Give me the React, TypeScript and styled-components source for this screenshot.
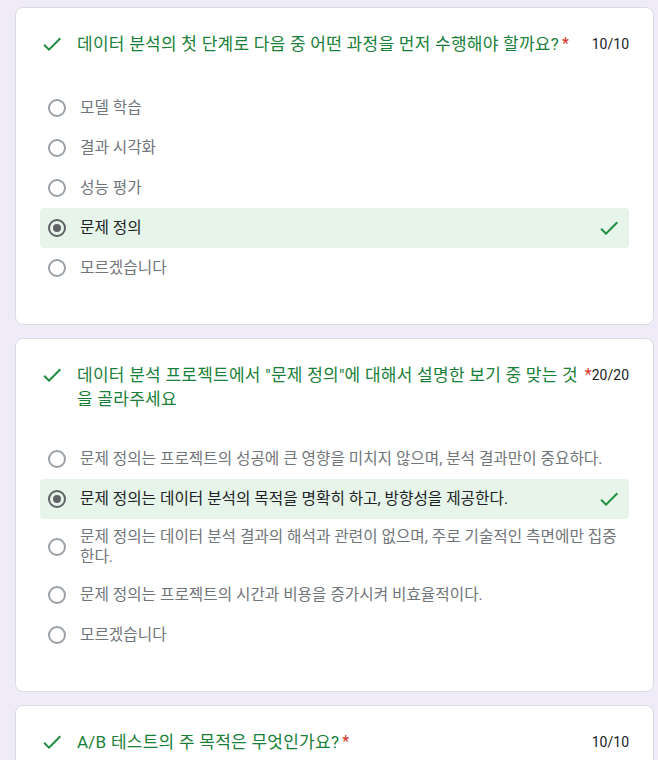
import React from 'react'
import styled, { createGlobalStyle } from 'styled-components'

type Question = {
    id: number
    title: string
    points: string
    options: string[]
    selected: number
}

const questions: Question[] = [
    {
        id: 1,
        title: '데이터 분석의 첫 단계로 다음 중 어떤 과정을 먼저 수행해야 할까요?',
        points: '10/10',
        options: ['모델 학습', '결과 시각화', '성능 평가', '문제 정의', '모르겠습니다'],
        selected: 3,
    },
    {
        id: 2,
        title: '데이터 분석 프로젝트에서 "문제 정의"에 대해서 설명한 보기 중 맞는 것을 골라주세요',
        points: '20/20',
        options: [
            '문제 정의는 프로젝트의 성공에 큰 영향을 미치지 않으며, 분석 결과만이 중요하다.',
            '문제 정의는 데이터 분석의 목적을 명확히 하고, 방향성을 제공한다.',
            '문제 정의는 데이터 분석 결과의 해석과 관련이 없으며, 주로 기술적인 측면에만 집중한다.',
            '문제 정의는 프로젝트의 시간과 비용을 증가시켜 비효율적이다.',
            '모르겠습니다',
        ],
        selected: 1,
    },
    {
        id: 3,
        title: 'A/B 테스트의 주 목적은 무엇인가요?',
        points: '10/10',
        options: [],
        selected: -1,
    },
]

const CheckIcon: React.FC = () => (
    <svg width="24" height="24" viewBox="0 0 24 24" aria-hidden="true">
        <path fill="#1e8e3e" d="M9 16.17L4.83 12l-1.42 1.41L9 19 21 7l-1.41-1.41z" />
    </svg>
)

const App: React.FC = () => {
    return (
        <>
            <GlobalStyle />
            <Page>
                {questions.map(q => (
                    <Card key={q.id}>
                        <Header>
                            <IconSlot><CheckIcon /></IconSlot>
                            <Title>{q.title}</Title>
                            <Required>*</Required>
                            <Points>{q.points}</Points>
                        </Header>
                        {q.options.length > 0 &&
                            <Options>
                                {q.options.map((opt, i) => {
                                    const picked = i === q.selected
                                    return (
                                        <Option key={opt} $picked={picked}>
                                            <Radio $picked={picked} />
                                            <Label $picked={picked}>{opt}</Label>
                                            {picked && <RowCheck><CheckIcon /></RowCheck>}
                                        </Option>
                                    )
                                })}
                            </Options>
                        }
                    </Card>
                ))}
            </Page>
        </>
    )
}

export default App

const GlobalStyle = createGlobalStyle`
    body {
        margin: 0;
        background: #f0ebf8;
        font-family: Roboto, "Noto Sans CJK KR", sans-serif;
    }
`

const Page = styled.div`
    display: flex;
    flex-direction: column;
    gap: 13px;
    padding: 7px 4px 0 15px;
`

const Card = styled.div`
    background: #fff;
    border: 1px solid #dadce0;
    border-radius: 8px;
    padding: 24px 24px 36px 24px;
`

const Header = styled.div`
    display: flex;
    align-items: flex-start;
    min-height: 28px;
`

const IconSlot = styled.div`
    flex: none;
    width: 24px;
    height: 24px;
    margin-right: 13px;
`

const Title = styled.div`
    flex: 0 1 auto;
    min-width: 0;
    color: #188038;
    font-size: 17px;
    line-height: 24px;
    letter-spacing: 0.25px;
`

const Required = styled.span`
    flex: none;
    color: #d93025;
    font-size: 16px;
    line-height: 24px;
    padding-left: 3px;
`

const Points = styled.div`
    flex: none;
    margin-left: auto;
    color: #202124;
    font-size: 14px;
    line-height: 24px;
`

const Options = styled.div`
    display: flex;
    flex-direction: column;
    margin-top: 28px;
`

const Option = styled.div<{ $picked: boolean }>`
    display: flex;
    align-items: center;
    min-height: 40px;
    box-sizing: border-box;
    padding: 8px;
    border-radius: 4px;
    background: ${p => p.$picked ? '#e6f4ea' : 'transparent'};
`

const Radio = styled.span<{ $picked: boolean }>`
    flex: none;
    position: relative;
    width: 18px;
    height: 18px;
    box-sizing: border-box;
    border-radius: 50%;
    border: 2px solid ${p => p.$picked ? '#5f6368' : '#9aa0a6'};
    margin-right: 14px;

    &::after {
        content: '';
        display: ${p => p.$picked ? 'block' : 'none'};
        position: absolute;
        left: 3px;
        top: 3px;
        width: 8px;
        height: 8px;
        border-radius: 50%;
        background: #5f6368;
    }
`

const Label = styled.div<{ $picked: boolean }>`
    flex: 1;
    min-width: 0;
    color: ${p => p.$picked ? '#202124' : '#70757a'};
    font-size: 15.7px;
    line-height: 20px;
`

const RowCheck = styled.div`
    flex: none;
    width: 24px;
    height: 24px;
    margin-left: 8px;
`
